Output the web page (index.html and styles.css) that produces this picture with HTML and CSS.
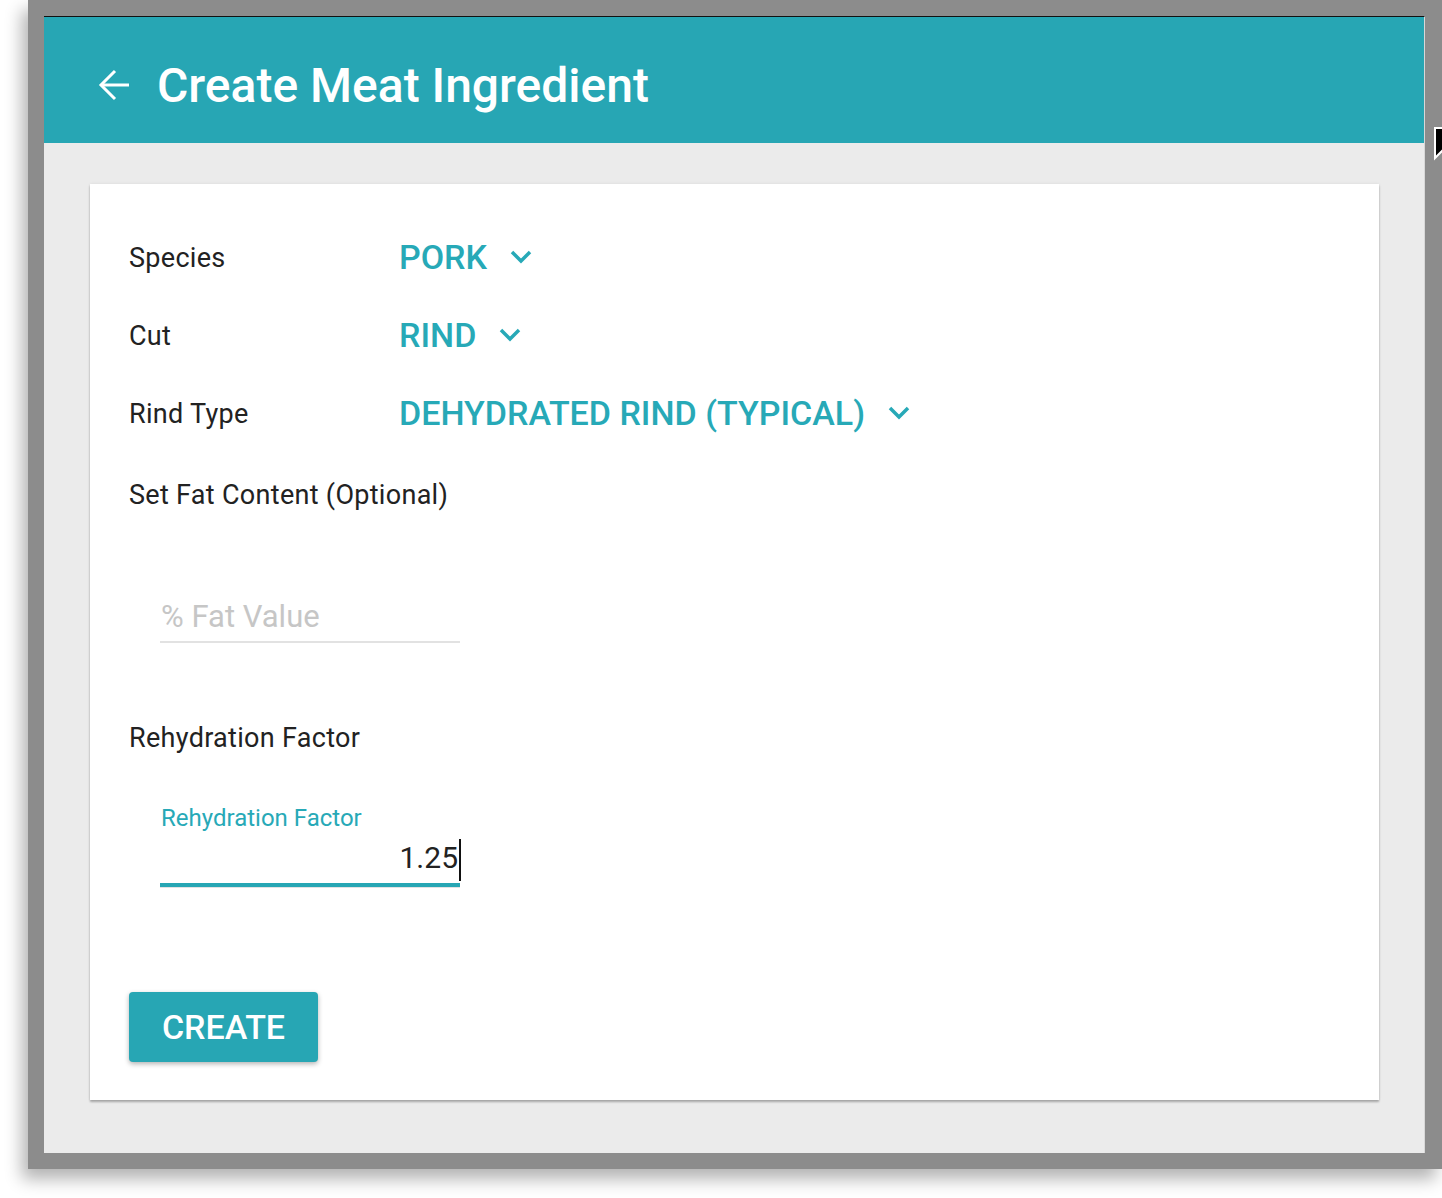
FILE: index.html
```html
<!DOCTYPE html>
<html lang="en">
<head>
  <meta charset="UTF-8">
  <meta name="viewport" content="width=device-width, initial-scale=1.0">
  <title>Create Meat Ingredient</title>
  <link rel="stylesheet" href="styles.css">
</head>
<body>
  <div class="frame">
    <div class="window">
      <!-- Header -->
      <div class="app-bar">
        <svg class="back-icon" viewBox="0 0 32 32" width="32" height="32" fill="none" stroke="#fff" stroke-width="3"><line x1="3" y1="16" x2="31" y2="16"></line><polyline points="17,2 3,16 17,30"></polyline></svg>
        <h1 class="title">Create Meat Ingredient</h1>
      </div>

      <!-- Form -->
      <div class="content">
        <div class="card">
          <div class="field-row">
            <div class="field-label">Species</div>
            <div class="select">
              PORK
              <svg viewBox="0 0 22 15" width="22" height="15" fill="none" stroke="currentColor" stroke-width="3.5"><polyline points="2,3 11,12 20,3"></polyline></svg>
            </div>
          </div>
          <div class="field-row">
            <div class="field-label">Cut</div>
            <div class="select">
              RIND
              <svg viewBox="0 0 22 15" width="22" height="15" fill="none" stroke="currentColor" stroke-width="3.5"><polyline points="2,3 11,12 20,3"></polyline></svg>
            </div>
          </div>
          <div class="field-row">
            <div class="field-label">Rind Type</div>
            <div class="select">
              DEHYDRATED RIND (TYPICAL)
              <svg viewBox="0 0 22 15" width="22" height="15" fill="none" stroke="currentColor" stroke-width="3.5"><polyline points="2,3 11,12 20,3"></polyline></svg>
            </div>
          </div>

          <div class="field-row section-row">
            <div class="field-label">Set Fat Content (Optional)</div>
          </div>
          <div class="text-field">
            <span class="placeholder">% Fat Value</span>
          </div>

          <div class="field-row rehydration-row">
            <div class="field-label">Rehydration Factor</div>
          </div>
          <div class="text-field focused">
            <div class="float-label">Rehydration Factor</div>
            <div class="value">1.25<span class="caret"></span></div>
          </div>

          <button class="create-button">CREATE</button>
        </div>
      </div>
    </div>
  </div>

  <svg class="pointer" viewBox="0 0 14 40" width="14" height="40"><path d="M1 2 L1 32 L8 25 L14 36 L14 2 Z" fill="#000" stroke="#fff" stroke-width="2"></path></svg>
</body>
</html>
```

FILE: styles.css
```css
* {
  margin: 0;
  padding: 0;
  box-sizing: border-box;
  font-family: Roboto, "Noto Sans", sans-serif;
}

body {
  background-color: #ffffff;
  width: 1442px;
  height: 1198px;
  overflow: hidden;
  position: relative;
}

.frame {
  margin-left: 28px;
  height: 1169px;
  background-color: #8c8c8c;
  padding: 16px 17px 16px 16px;
  box-shadow: -6px 10px 16px rgba(0, 0, 0, 0.3);
}

.window {
  height: 100%;
  background-color: #ebebeb;
  border-top: 1px solid #111;
  border-right: 1px solid #d8d8d8;
  display: flex;
  flex-direction: column;
}

.app-bar {
  height: 126px;
  background-color: #27a6b4;
  display: flex;
  align-items: center;
  padding: 10px 0 0 54px;
  gap: 27px;
  flex-shrink: 0;
}

.back-icon {
  flex-shrink: 0;
}

.title {
  color: #ffffff;
  font-size: 48px;
  font-weight: 500;
}

.content {
  flex-grow: 1;
  padding: 41px 45px 0 46px;
}

.card {
  background-color: #ffffff;
  padding: 35px 39px 38px;
  box-shadow: 0 2px 2px rgba(0, 0, 0, 0.28), 0 0 3px rgba(0, 0, 0, 0.08);
}

.field-row {
  display: flex;
  align-items: center;
  height: 78px;
}

.field-label {
  width: 270px;
  flex-shrink: 0;
  font-size: 27px;
  letter-spacing: 0.3px;
  color: #222;
  white-space: nowrap;
}

.select {
  display: flex;
  align-items: center;
  gap: 23px;
  color: #27a9b7;
  font-size: 34px;
  font-weight: 500;
  margin-top: -3px;
  cursor: pointer;
}

.section-row {
  margin-top: 3px;
}

.text-field {
  margin-left: 31px;
  width: 300px;
}

.text-field:not(.focused) {
  margin-top: 57px;
  height: 52px;
  border-bottom: 2px solid #e2e2e2;
  display: flex;
  align-items: center;
}

.placeholder {
  font-size: 31px;
  color: #c6c6c6;
  margin-left: 1px;
}

.rehydration-row {
  margin-top: 56px;
}

.focused {
  margin-top: 27px;
  padding: 0 2px;
  border-bottom: 4px solid #27a6b4;
  box-shadow: 0 1px 0 #e2e2e2;
}

.float-label {
  font-size: 24px;
  line-height: 28px;
  color: #27a9b7;
  margin-left: -1px;
}

.value {
  font-size: 30px;
  line-height: 40px;
  color: #222;
  text-align: right;
  margin: 6px 0 2px;
}

.caret {
  display: inline-block;
  width: 2px;
  height: 42px;
  background-color: #111;
  vertical-align: middle;
  margin-left: 1px;
  margin-right: -3px;
}

.create-button {
  margin-top: 105px;
  width: 189px;
  height: 70px;
  background-color: #27a6b4;
  color: #ffffff;
  font-size: 34px;
  font-weight: 500;
  border: none;
  border-radius: 4px;
  box-shadow: 0 2px 5px rgba(0, 0, 0, 0.3);
  cursor: pointer;
}

.pointer {
  position: absolute;
  left: 1434px;
  top: 126px;
}
```
